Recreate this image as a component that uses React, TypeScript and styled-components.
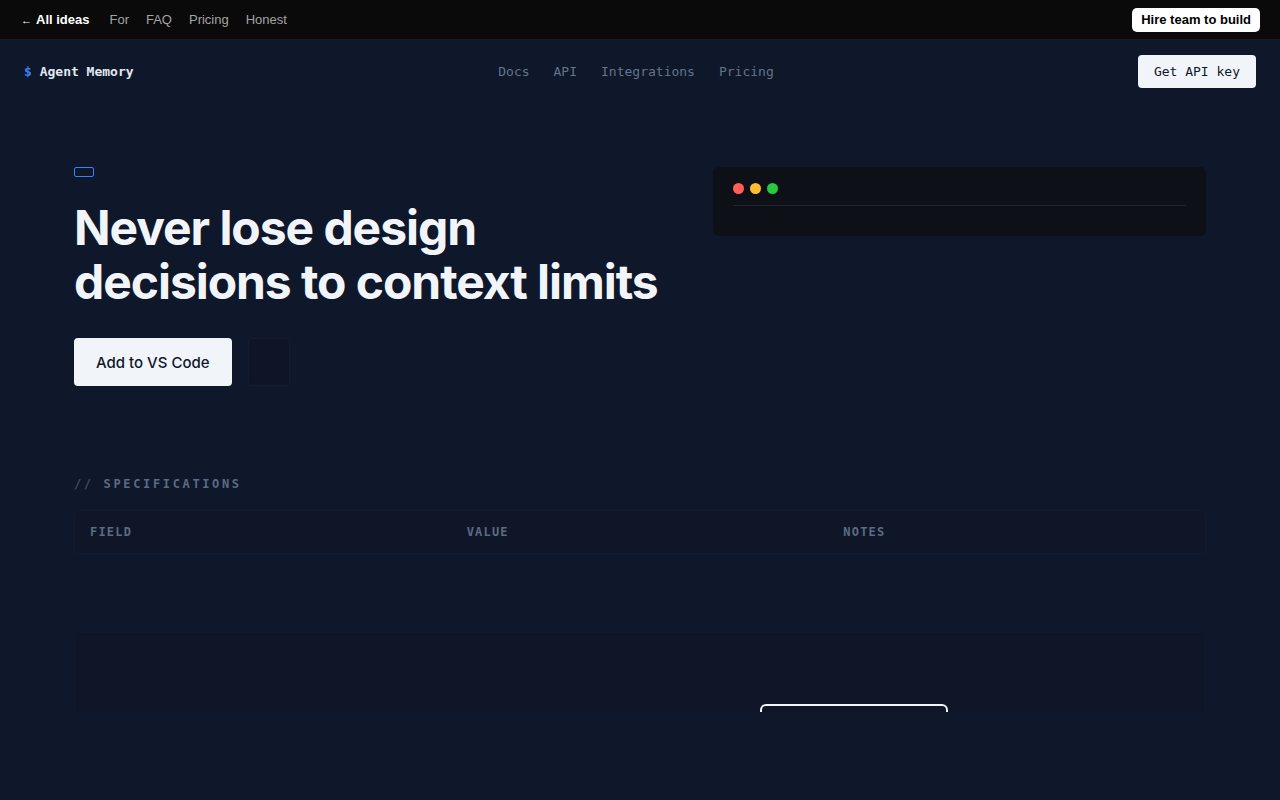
import styled, { createGlobalStyle } from "styled-components";

const Global = createGlobalStyle`
  * { box-sizing: border-box; }
  html, body {
    margin: 0;
    background: #0f172a;
    min-height: 100%;
  }
  body { font-family: "Inter", "Liberation Sans", sans-serif; }
`;

const mono = `"DejaVu Sans Mono", "Liberation Mono", monospace`;

const TopBar = styled.div`
  height: 40px;
  background: #0a0a0a;
  border-bottom: 1px solid #1c1c1c;
  display: flex;
  align-items: center;
  justify-content: space-between;
  padding: 0 20px 0 21px;
  font-family: "Liberation Sans", Arial, sans-serif;
  font-size: 13px;
`;

const TopLinks = styled.nav`
  display: flex;
  align-items: center;
  gap: 17px;
`;

const BackLink = styled.a`
  color: #fff;
  font-weight: 700;
  margin-right: 3px;
  text-decoration: none;
  span { font-size: 11px; font-weight: 400; margin-right: 4px; }
`;

const TopLink = styled.a`
  color: #a3a3a3;
  text-decoration: none;
`;

const HireButton = styled.button`
  background: #fff;
  color: #000;
  border: 0;
  border-radius: 5px;
  height: 24px;
  padding: 0 9px;
  font-family: "Liberation Sans", Arial, sans-serif;
  font-weight: 700;
  font-size: 13px;
`;

const Header = styled.header`
  height: 63px;
  display: grid;
  grid-template-columns: 1fr auto 1fr;
  align-items: center;
  padding: 0 24px;
  font-family: ${mono};
  font-size: 13px;
`;

const Logo = styled.div`
  color: #e2e8f0;
  font-weight: 700;
  span { color: #3b82f6; }
`;

const Nav = styled.nav`
  display: flex;
  gap: 24px;
  margin-right: 8px;
  a { color: #64748b; text-decoration: none; }
`;

const KeyButton = styled.button`
  justify-self: end;
  height: 33px;
  padding: 0 16px;
  background: #f1f5f9;
  color: #0f172a;
  border: 0;
  border-radius: 4px;
  font-family: ${mono};
  font-size: 13px;
`;

const Main = styled.main`
  padding: 64px 74px 0;
`;

const Hero = styled.section`
  display: grid;
  grid-template-columns: 1fr 493px;
  gap: 40px;
  align-items: start;
`;

const Badge = styled.span`
  display: block;
  width: 20px;
  height: 10px;
  border: 1px solid #3b82f6;
  border-radius: 2px;
`;

const Title = styled.h1`
  margin: 24px 0 29px;
  font-size: 48px;
  line-height: 54px;
  font-weight: 700;
  letter-spacing: -0.022em;
  color: #f1f5f9;
`;

const Actions = styled.div`
  display: flex;
  gap: 16px;
`;

const PrimaryButton = styled.button`
  height: 48px;
  padding: 0 22px;
  background: #f1f5f9;
  color: #0f172a;
  border: 0;
  border-radius: 4px;
  font-family: "Inter", sans-serif;
  font-weight: 500;
  font-size: 15px;
`;

const GhostButton = styled.button`
  width: 42px;
  height: 48px;
  background: #0e1526;
  border: 1px solid #141c2e;
  border-radius: 4px;
`;

const Terminal = styled.div`
  background: #0d1117;
  border-radius: 6px;
  padding: 16px 20px 30px;
`;

const TerminalBar = styled.div`
  display: flex;
  gap: 6px;
  padding-bottom: 11px;
  border-bottom: 1px solid #21262d;
`;

const Dot = styled.span<{ $c: string }>`
  width: 11px;
  height: 11px;
  border-radius: 50%;
  background: ${(p) => p.$c};
`;

const Specs = styled.section`
  margin-top: 91px;
`;

const SpecTitle = styled.div`
  font-family: ${mono};
  font-size: 12px;
  font-weight: 700;
  letter-spacing: 0.22em;
  color: #5b6b84;
  margin-bottom: 19px;
  span { color: #3f4d66; }
`;

const TableHead = styled.div`
  display: grid;
  grid-template-columns: repeat(3, 1fr);
  height: 44px;
  align-items: center;
  background: #0e1628;
  border: 1px solid #121a2b;
  border-radius: 4px 4px 0 0;
  font-family: ${mono};
  font-size: 12px;
  font-weight: 700;
  letter-spacing: 0.1em;
  color: #5b6b84;
  div { padding-left: 15px; }
`;

const TableBody = styled.div`
  height: 78px;
`;

const Panel = styled.div`
  height: 80px;
  overflow: hidden;
  background: #0e1627;
  border: 1px solid #111a2b;
  border-bottom: 0;
  border-radius: 6px 6px 0 0;
  padding: 71px 0 0 685px;
`;

const OutlineBox = styled.div`
  width: 188px;
  height: 40px;
  border: 2px solid #f1f5f9;
  border-radius: 6px;
`;

export default function App() {
  return (
    <>
      <Global />
      <TopBar>
        <TopLinks>
          <BackLink href="#"><span>←</span>All ideas</BackLink>
          <TopLink href="#">For</TopLink>
          <TopLink href="#">FAQ</TopLink>
          <TopLink href="#">Pricing</TopLink>
          <TopLink href="#">Honest</TopLink>
        </TopLinks>
        <HireButton>Hire team to build</HireButton>
      </TopBar>
      <Header>
        <Logo><span>$</span> Agent Memory</Logo>
        <Nav>
          <a href="#">Docs</a>
          <a href="#">API</a>
          <a href="#">Integrations</a>
          <a href="#">Pricing</a>
        </Nav>
        <KeyButton>Get API key</KeyButton>
      </Header>
      <Main>
        <Hero>
          <div>
            <Badge />
            <Title>Never lose design decisions to context limits</Title>
            <Actions>
              <PrimaryButton>Add to VS Code</PrimaryButton>
              <GhostButton aria-label="more" />
            </Actions>
          </div>
          <Terminal>
            <TerminalBar>
              <Dot $c="#ff5f57" />
              <Dot $c="#febc2e" />
              <Dot $c="#28c840" />
            </TerminalBar>
          </Terminal>
        </Hero>
        <Specs>
          <SpecTitle><span>//</span> SPECIFICATIONS</SpecTitle>
          <TableHead>
            <div>FIELD</div>
            <div>VALUE</div>
            <div>NOTES</div>
          </TableHead>
          <TableBody />
          <Panel>
            <OutlineBox />
          </Panel>
        </Specs>
      </Main>
    </>
  );
}
